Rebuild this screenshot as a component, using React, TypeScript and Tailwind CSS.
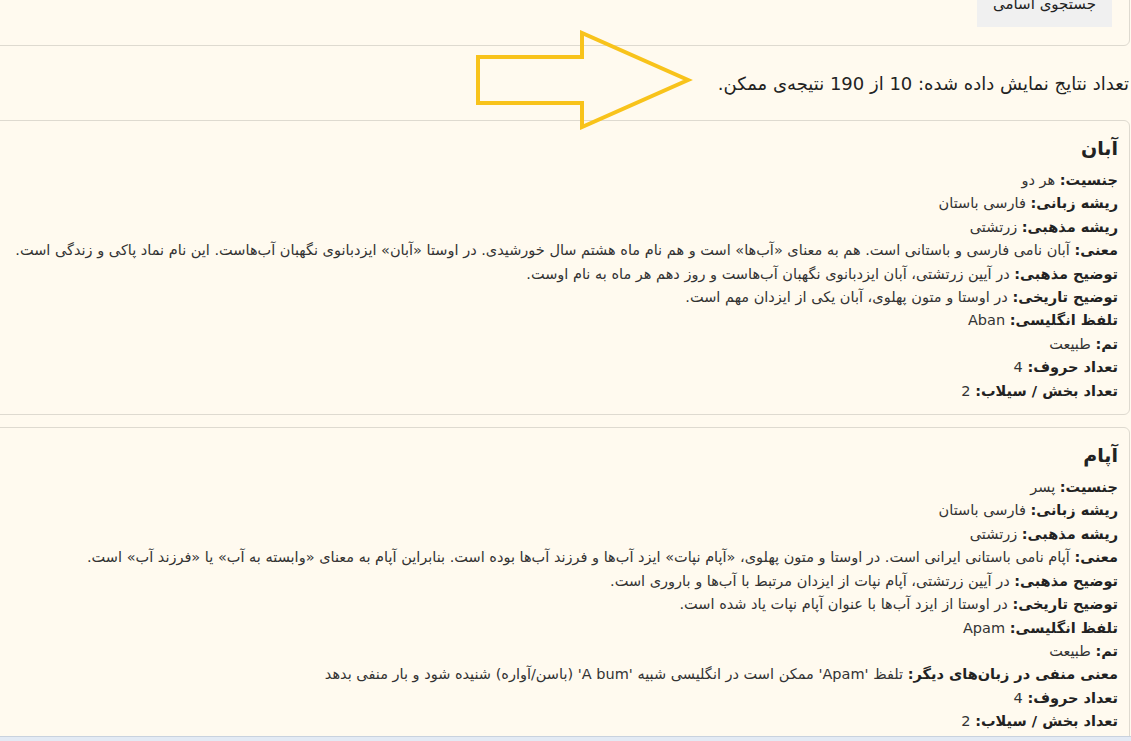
type Field = { label: string; value: string };

const cards: { title: string; fields: Field[] }[] = [
  {
    title: "آبان",
    fields: [
      { label: "جنسیت:", value: "هر دو" },
      { label: "ریشه زبانی:", value: "فارسی باستان" },
      { label: "ریشه مذهبی:", value: "زرتشتی" },
      {
        label: "معنی:",
        value:
          "آبان نامی فارسی و باستانی است. هم به معنای «آب‌ها» است و هم نام ماه هشتم سال خورشیدی. در اوستا «آبان» ایزدبانوی نگهبان آب‌هاست. این نام نماد پاکی و زندگی است.",
      },
      {
        label: "توضیح مذهبی:",
        value: "در آیین زرتشتی، آبان ایزدبانوی نگهبان آب‌هاست و روز دهم هر ماه به نام اوست.",
      },
      { label: "توضیح تاریخی:", value: "در اوستا و متون پهلوی، آبان یکی از ایزدان مهم است." },
      { label: "تلفظ انگلیسی:", value: "Aban" },
      { label: "تم:", value: "طبیعت" },
      { label: "تعداد حروف:", value: "4" },
      { label: "تعداد بخش / سیلاب:", value: "2" },
    ],
  },
  {
    title: "آپام",
    fields: [
      { label: "جنسیت:", value: "پسر" },
      { label: "ریشه زبانی:", value: "فارسی باستان" },
      { label: "ریشه مذهبی:", value: "زرتشتی" },
      {
        label: "معنی:",
        value:
          "آپام نامی باستانی ایرانی است. در اوستا و متون پهلوی، «آپام نپات» ایزد آب‌ها و فرزند آب‌ها بوده است. بنابراین آپام به معنای «وابسته به آب» یا «فرزند آب» است.",
      },
      {
        label: "توضیح مذهبی:",
        value: "در آیین زرتشتی، آپام نپات از ایزدان مرتبط با آب‌ها و باروری است.",
      },
      { label: "توضیح تاریخی:", value: "در اوستا از ایزد آب‌ها با عنوان آپام نپات یاد شده است." },
      { label: "تلفظ انگلیسی:", value: "Apam" },
      { label: "تم:", value: "طبیعت" },
      {
        label: "معنی منفی در زبان‌های دیگر:",
        value: "تلفظ 'Apam' ممکن است در انگلیسی شبیه 'A bum' (باسن/آواره) شنیده شود و بار منفی بدهد",
      },
      { label: "تعداد حروف:", value: "4" },
      { label: "تعداد بخش / سیلاب:", value: "2" },
    ],
  },
];

function NameCard({ title, fields }: { title: string; fields: Field[] }) {
  return (
    <div className="-ml-[20px] mr-[1px] shrink-0 rounded-md border border-[#dedad0] bg-[#fffaef] pr-[11px] pl-4 pt-[13px] pb-[11px]">
      <h3 className="text-[19px] font-bold leading-[28px] text-[#222]">{title}</h3>
      <div className="mt-[7px] text-[14.5px] leading-[23.4px] text-[#333]">
        {fields.map((f) => (
          <p key={f.label} className="whitespace-nowrap">
            <b className="font-bold text-[#222]">{f.label}</b> {f.value}
          </p>
        ))}
      </div>
    </div>
  );
}

export default function App() {
  return (
    <div
      dir="rtl"
      className="relative flex h-[741px] flex-col overflow-hidden bg-[#fffaef]"
      style={{ fontFamily: '"DejaVu Sans", sans-serif' }}
    >
      {/* search card, scrolled mostly out of view */}
      <div className="-ml-[20px] mr-[1px] -mt-[30px] flex h-[76px] shrink-0 items-end rounded-md border border-[#dedad0] pr-[17px] pb-[18px]">
        <button className="flex h-[40px] w-[135px] items-start justify-center bg-[#f0f0f0] pt-[8px] text-[15px] leading-[18px] text-[#222]">
          جستجوی اسامی
        </button>
      </div>

      {/* results count */}
      <div className="flex h-[74px] shrink-0 items-center pr-[2px] text-[18px] text-[#222]">
        تعداد نتایج نمایش داده شده: 10 از 190 نتیجه‌ی ممکن.
      </div>

      <div className="flex shrink-0 flex-col gap-[12px]">
        {cards.map((c) => (
          <NameCard key={c.title} title={c.title} fields={c.fields} />
        ))}
      </div>

      {/* horizontal scrollbar strip */}
      <div className="absolute inset-x-0 bottom-0 h-[5px] border-t border-[#c9d2de] bg-[#e3eaf4]" />

      {/* annotation arrow */}
      <svg
        className="pointer-events-none absolute left-[474px] top-[30px]"
        width="220"
        height="100"
        viewBox="0 0 220 100"
      >
        <polygon
          points="4,27 108,27 108,3 214,50 108,97 108,73 4,73"
          fill="none"
          stroke="#f8c31b"
          strokeWidth="4"
          strokeLinejoin="miter"
        />
      </svg>
    </div>
  );
}
